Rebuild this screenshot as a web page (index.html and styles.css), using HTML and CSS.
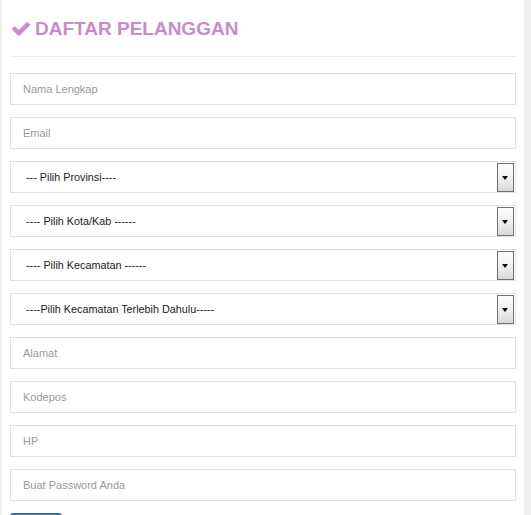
FILE: index.html
```html
<!DOCTYPE html>
<html lang="id">
<head>
<meta charset="utf-8">
<title>Daftar Pelanggan</title>
<link rel="stylesheet" href="styles.css">
</head>
<body>
<div class="panel">
  <h3 class="title">
    <svg class="check" viewBox="121 334 1550 1188" width="18" height="14" aria-hidden="true"><path d="M1671 566q0 40-28 68l-724 724-136 136q-28 28-68 28t-68-28l-136-136-362-362q-28-28-28-68t28-68l136-136q28-28 68-28t68 28l294 295 656-657q28-28 68-28t68 28l136 136q28 28 28 68z"/></svg>
    <span>DAFTAR PELANGGAN</span>
  </h3>
  <hr class="rule">
  <form class="form">
    <input class="field" type="text" placeholder="Nama Lengkap">
    <input class="field" type="email" placeholder="Email">
    <div class="select-wrap">
      <select class="field select"><option>--- Pilih Provinsi----</option></select>
      <span class="arrow"></span>
    </div>
    <div class="select-wrap">
      <select class="field select"><option>---- Pilih Kota/Kab ------</option></select>
      <span class="arrow"></span>
    </div>
    <div class="select-wrap">
      <select class="field select"><option>---- Pilih Kecamatan ------</option></select>
      <span class="arrow"></span>
    </div>
    <div class="select-wrap">
      <select class="field select"><option>----Pilih Kecamatan Terlebih Dahulu-----</option></select>
      <span class="arrow"></span>
    </div>
    <input class="field" type="text" placeholder="Alamat">
    <input class="field" type="text" placeholder="Kodepos">
    <input class="field" type="text" placeholder="HP">
    <input class="field" type="password" placeholder="Buat Password Anda">
    <div class="actions"><button class="btn" type="button" aria-label="Daftar"></button></div>
  </form>
</div>
</body>
</html>
```

FILE: styles.css
```css
* { box-sizing: border-box; }
html, body { margin: 0; padding: 0; }
body {
  background: #efefef;
  font-family: "Liberation Sans", Arial, sans-serif;
  height: 515px;
  overflow: hidden;
}
.panel {
  margin-left: 2px;
  width: 522px;
  min-height: 515px;
  background: #fff;
  padding: 18px 8px 0 8px;
}
.title {
  margin: 0;
  display: flex;
  align-items: center;
  gap: 5px;
  padding-left: 2px;
  height: 21px;
  font-size: 19px;
  line-height: 21px;
  font-weight: bold;
  color: #c78dc7;
}
.check { fill: #c78dc7; flex: none; margin-top: 1px; }
.rule {
  margin: 17px 0 16px 0;
  border: 0;
  border-top: 1px solid #ececec;
  height: 0;
}
.form {
  display: flex;
  flex-direction: column;
  gap: 12px;
}
.field {
  display: block;
  width: 100%;
  height: 32px;
  border: 1px solid #e2e2e2;
  border-radius: 0;
  background: #fff;
  padding: 0 12px;
  font-family: "Liberation Sans", Arial, sans-serif;
  font-size: 11px;
  color: #333;
  outline: none;
}
.field::placeholder { color: #9a9a9a; }
.select-wrap { position: relative; }
.select {
  -webkit-appearance: none;
  appearance: none;
  padding-left: 15px;
  font-size: 10.8px;
  color: #1a1a1a;
}
.arrow {
  position: absolute;
  right: 2px;
  top: 2px;
  width: 17px;
  height: 29px;
  border: 1px solid #707070;
  background: linear-gradient(#fdfdfd, #f4f4f4 40%, #d9d9d9);
  pointer-events: none;
}
.arrow::after {
  content: "";
  position: absolute;
  left: 4px;
  top: 12px;
  border-left: 3.5px solid transparent;
  border-right: 3.5px solid transparent;
  border-top: 4px solid #000;
}
.actions { display: flex; }
.btn {
  width: 52px;
  height: 32px;
  border: 1px solid #2e6da4;
  border-radius: 3px;
  background: #337ab7;
}
```
